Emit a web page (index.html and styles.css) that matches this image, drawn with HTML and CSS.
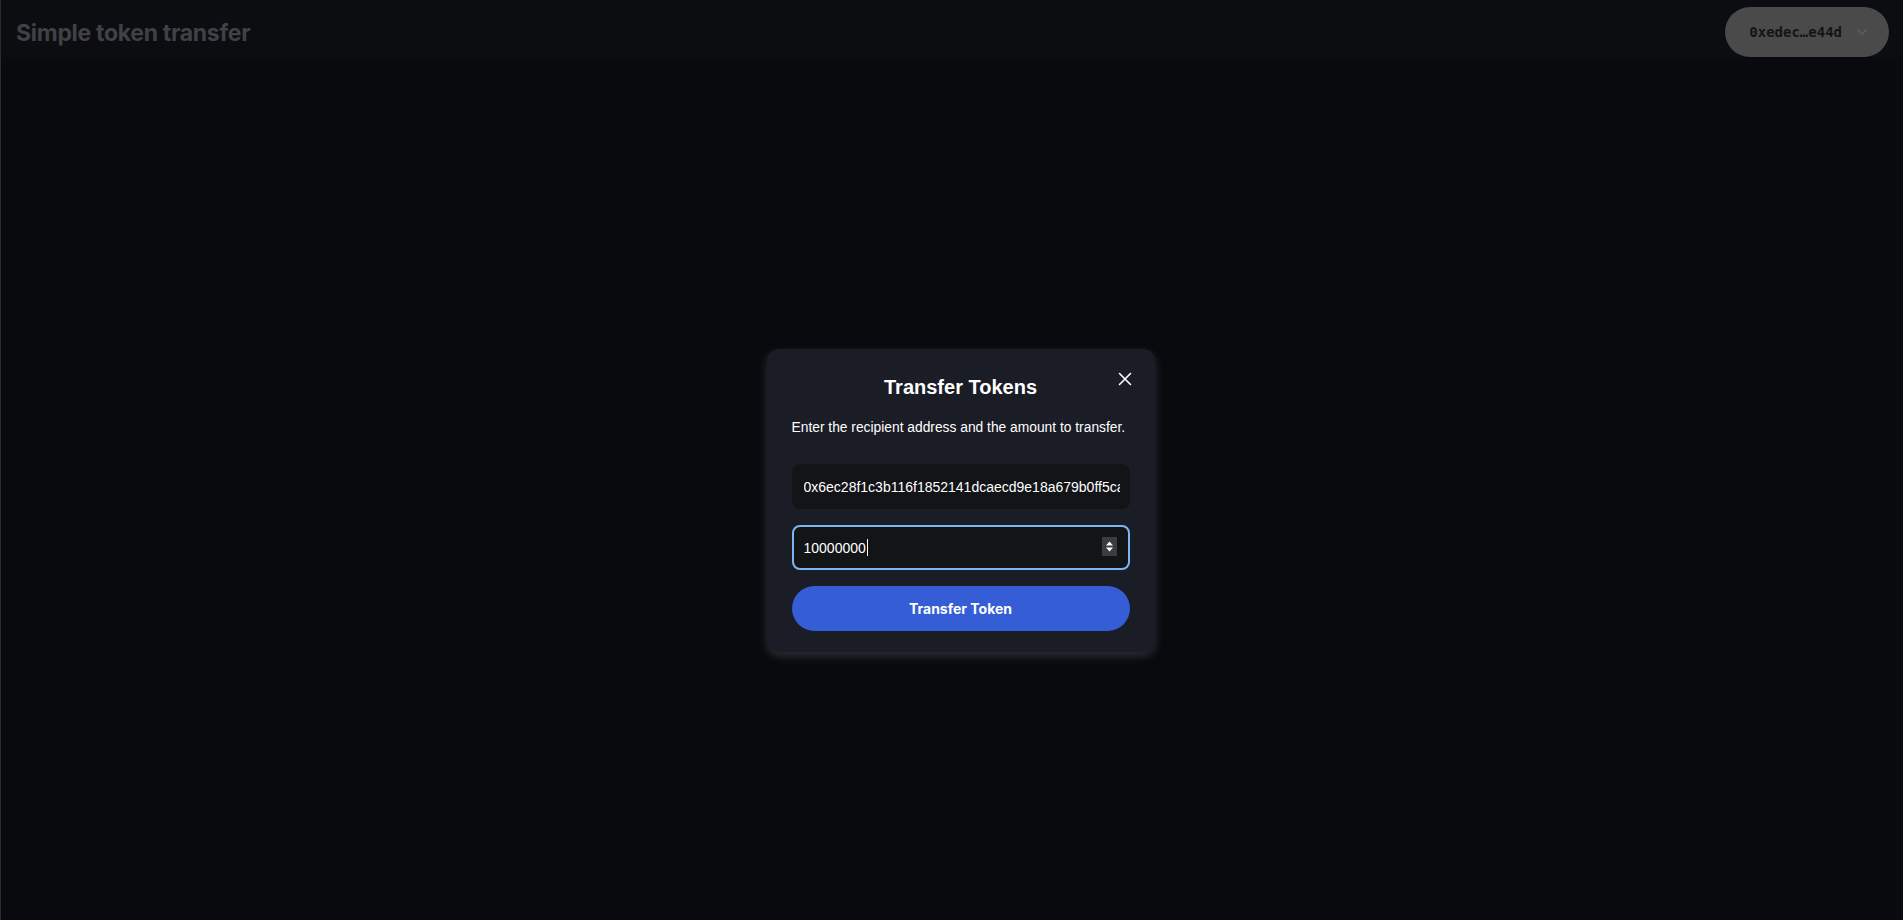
FILE: index.html
```html
<!DOCTYPE html>
<html lang="en">
<head>
    <meta charset="UTF-8">
    <meta name="viewport" content="width=device-width, initial-scale=1.0">
    <title>Simple token transfer</title>
    <link rel="stylesheet" href="styles.css">
</head>
<body>

    <div class="app">
        <header class="top-bar">
            <h1 class="app-title">Simple token transfer</h1>
            <button class="account-button">
                <span class="account-address">0xedec…e44d</span>
                <svg class="chevron" width="12" height="8" viewBox="0 0 12 8" fill="none">
                    <path d="M1.5 1.8L6 6.2L10.5 1.8" stroke="currentColor" stroke-width="1.6" stroke-linecap="round" stroke-linejoin="round"/>
                </svg>
            </button>
        </header>

        <main class="stage">
            <div class="modal">
                <button class="close-button" aria-label="Close">
                    <svg width="14" height="14" viewBox="0 0 14 14" fill="none">
                        <path d="M1.5 1.5L12.5 12.5M12.5 1.5L1.5 12.5" stroke="currentColor" stroke-width="1.6" stroke-linecap="round"/>
                    </svg>
                </button>

                <h2 class="modal-title">Transfer Tokens</h2>
                <p class="modal-text">Enter the recipient address and the amount to transfer.</p>

                <div class="field">
                    <span class="field-value clipped">0x6ec28f1c3b116f1852141dcaecd9e18a679b0ff5ca3d</span>
                </div>

                <div class="field focused">
                    <span class="field-value">10000000</span><span class="caret"></span>
                    <span class="spinner">
                        <svg width="15" height="19" viewBox="0 0 15 19">
                            <path d="M7.5 4.5L11 8.5H4z" fill="#fff"/>
                            <path d="M7.5 14.5L11 10.5H4z" fill="#fff"/>
                        </svg>
                    </span>
                </div>

                <button class="transfer-button">Transfer Token</button>
            </div>
        </main>
    </div>

</body>
</html>
```

FILE: styles.css
```css
html, body {
    margin: 0;
    height: 100%;
}

body {
    background-color: #090a0d;
    font-family: "Liberation Sans", Arial, sans-serif;
    color: #fff;
}

.app {
    display: flex;
    flex-direction: column;
    height: 100%;
    border-left: 1px solid #2a2c31;
    box-sizing: border-box;
}

.top-bar {
    display: flex;
    justify-content: space-between;
    align-items: flex-start;
    height: 57px;
    padding: 7px 14px 0 15px;
    box-sizing: border-box;
    background-color: #0c0d11;
}

.app-title {
    margin: 12px 0 0;
    font-family: Inter, "Noto Sans", sans-serif;
    font-size: 23px;
    line-height: 28px;
    font-weight: 700;
    letter-spacing: -0.3px;
    color: #3f4146;
}

.account-button {
    display: flex;
    align-items: center;
    gap: 14px;
    height: 50px;
    padding: 0 21px 0 24px;
    border: none;
    border-radius: 25px;
    background-color: #4a4a4b;
    cursor: pointer;
}

.account-address {
    font-family: "DejaVu Sans Mono", "Liberation Mono", monospace;
    font-size: 14px;
    font-weight: 700;
    color: #141416;
}

.chevron {
    color: #5e5f62;
}

.stage {
    flex: 1;
    display: flex;
    justify-content: center;
    align-items: flex-start;
    padding: 292px 0 0 17px;
}

.modal {
    position: relative;
    width: 388px;
    padding: 25px 25px 21px;
    box-sizing: border-box;
    background-color: #1a1d25;
    border-radius: 12px;
    box-shadow: 0 4px 10px rgba(110, 115, 130, 0.35);
    display: flex;
    flex-direction: column;
}

.close-button {
    position: absolute;
    top: 23px;
    right: 23px;
    width: 14px;
    height: 14px;
    padding: 0;
    border: none;
    background: none;
    color: #fff;
    cursor: pointer;
}

.modal-title {
    margin: 1px 0 0;
    font-size: 20px;
    line-height: 24px;
    font-weight: 700;
    text-align: center;
}

.modal-text {
    margin: 19px 0 0;
    font-size: 13.8px;
    line-height: 20px;
}

.field {
    position: relative;
    display: flex;
    align-items: center;
    height: 45px;
    margin-top: 26px;
    padding: 0 10px 0 12px;
    box-sizing: border-box;
    background-color: #131418;
    border-radius: 8px;
    font-size: 14px;
    white-space: nowrap;
}

.field + .field {
    margin-top: 16px;
}

.field-value.clipped {
    flex: 1;
    min-width: 0;
    overflow: hidden;
}

.field.focused {
    border: 2px solid #7db5ee;
    padding: 0 10px;
}

.caret {
    display: inline-block;
    width: 1px;
    height: 17px;
    margin-left: 1px;
    background-color: #fff;
}

.spinner {
    position: absolute;
    right: 11px;
    top: 10px;
    width: 15px;
    height: 19px;
    background-color: #3b3c3e;
}

.spinner svg {
    display: block;
}

.transfer-button {
    height: 45px;
    margin-top: 16px;
    border: none;
    border-radius: 23px;
    background-color: #355dd6;
    color: #fff;
    font-family: Inter, "Noto Sans", sans-serif;
    font-size: 14px;
    font-weight: 700;
    cursor: pointer;
}
```
